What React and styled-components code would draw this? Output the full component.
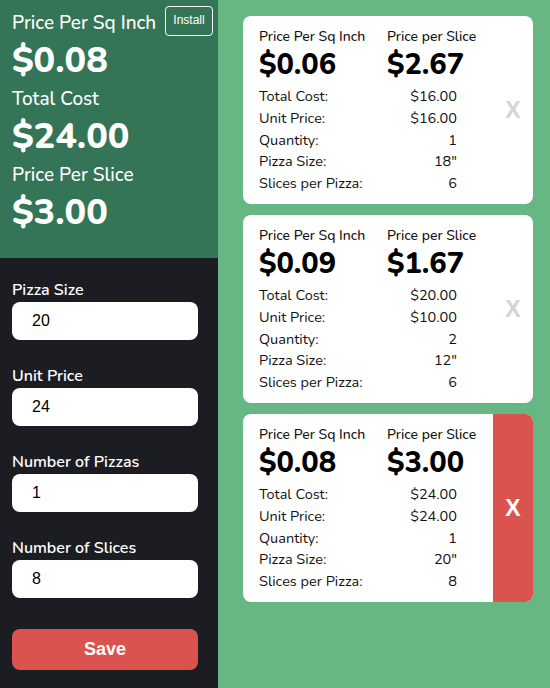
import React from "react";
import styled, { createGlobalStyle } from "styled-components";

const Global = createGlobalStyle`
  html, body { margin: 0; padding: 0; }
  body { font-family: "Nunito", "Lato", "Noto Sans", sans-serif; background: #66b784; }
  * { box-sizing: border-box; }
`;

const Page = styled.div`
  display: flex;
  width: 550px;
  height: 688px;
  background: #66b784;
  overflow: hidden;
`;

const Side = styled.div`
  width: 218px;
  display: flex;
  flex-direction: column;
  background: #1b1d22;
`;

const Summary = styled.div`
  position: relative;
  height: 258px;
  background: #357557;
  color: #fff;
  padding: 11px 12px;
`;

const SumLabel = styled.div`
  font-size: 19px;
  line-height: 24px;
  font-weight: 500;
`;

const SumValue = styled.div`
  font-size: 36px;
  line-height: 44px;
  font-weight: 800;
  margin: 4px 0 4px;
`;

const InstallButton = styled.button`
  position: absolute;
  top: 6px;
  right: 5px;
  width: 48px;
  height: 30px;
  background: transparent;
  color: #fff;
  border: 1px solid #fff;
  border-radius: 4px;
  font-family: "Liberation Sans", Arial, sans-serif;
  font-size: 12px;
  padding: 0 0 3px;
`;

const Form = styled.div`
  display: flex;
  flex-direction: column;
  padding: 23px 20px 0 12px;
`;

const Field = styled.label`
  display: flex;
  flex-direction: column;
  gap: 3px;
  margin-bottom: 27px;
`;

const FieldLabel = styled.span`
  color: #fff;
  font-size: 16px;
  line-height: 18px;
  font-weight: 600;
`;

const Input = styled.input`
  height: 38px;
  width: 186px;
  border: none;
  border-radius: 8px;
  background: #fff;
  padding: 0 20px;
  font-family: "Liberation Sans", Arial, sans-serif;
  font-size: 16px;
  color: #000;
  outline: none;
`;

const SaveButton = styled.button`
  margin-top: 4px;
  width: 186px;
  height: 41px;
  border: none;
  border-radius: 8px;
  background: #db534e;
  color: #fff;
  font-family: "Liberation Sans", Arial, sans-serif;
  font-size: 18px;
  font-weight: 700;
`;

const List = styled.div`
  flex: 1;
  display: flex;
  flex-direction: column;
  gap: 11px;
  padding: 16px 17px 0 25px;
`;

const Card = styled.div`
  display: flex;
  height: 188px;
  background: #fff;
  border-radius: 8px;
  overflow: hidden;
`;

const CardBody = styled.div`
  flex: 1;
  padding: 12px 16px 0;
  color: #111;
`;

const Heads = styled.div`
  display: grid;
  grid-template-columns: 128px 1fr;
`;

const HeadLabel = styled.div`
  font-size: 14px;
  line-height: 18px;
  font-weight: 500;
`;

const HeadValue = styled.div`
  font-size: 29px;
  line-height: 34px;
  margin-top: 2px;
  font-weight: 800;
  color: #000;
`;

const Rows = styled.div`
  display: grid;
  grid-template-columns: 128px 70px;
  margin-top: 4px;
`;

const RowLabel = styled.div`
  font-size: 14.5px;
  line-height: 21.8px;
`;

const RowValue = styled.div`
  font-size: 14.5px;
  line-height: 21.8px;
  text-align: right;
`;

const DeleteButton = styled.button`
  width: 40px;
  border: none;
  background: ${(p) => (p.$active ? "#db534e" : "transparent")};
  color: ${(p) => (p.$active ? "#fff" : "#d4d4d4")};
  font-family: "Liberation Sans", Arial, sans-serif;
  font-size: 23px;
  font-weight: 700;
  padding: 0;
  display: flex;
  align-items: center;
  justify-content: center;
`;

const entries = [
  { sq: "$0.06", slice: "$2.67", total: "$16.00", unit: "$16.00", qty: "1", size: '18"', slices: "6" },
  { sq: "$0.09", slice: "$1.67", total: "$20.00", unit: "$10.00", qty: "2", size: '12"', slices: "6" },
  { sq: "$0.08", slice: "$3.00", total: "$24.00", unit: "$24.00", qty: "1", size: '20"', slices: "8", active: true },
];

export default function App() {
  return (
    <>
      <Global />
      <Page>
        <Side>
          <Summary>
            <SumLabel>Price Per Sq Inch</SumLabel>
            <SumValue>$0.08</SumValue>
            <SumLabel>Total Cost</SumLabel>
            <SumValue>$24.00</SumValue>
            <SumLabel>Price Per Slice</SumLabel>
            <SumValue>$3.00</SumValue>
            <InstallButton>Install</InstallButton>
          </Summary>
          <Form>
            <Field>
              <FieldLabel>Pizza Size</FieldLabel>
              <Input defaultValue="20" />
            </Field>
            <Field>
              <FieldLabel>Unit Price</FieldLabel>
              <Input defaultValue="24" />
            </Field>
            <Field>
              <FieldLabel>Number of Pizzas</FieldLabel>
              <Input defaultValue="1" />
            </Field>
            <Field>
              <FieldLabel>Number of Slices</FieldLabel>
              <Input defaultValue="8" />
            </Field>
            <SaveButton>Save</SaveButton>
          </Form>
        </Side>
        <List>
          {entries.map((e, i) => (
            <Card key={i}>
              <CardBody>
                <Heads>
                  <HeadLabel>Price Per Sq Inch</HeadLabel>
                  <HeadLabel>Price per Slice</HeadLabel>
                  <HeadValue>{e.sq}</HeadValue>
                  <HeadValue>{e.slice}</HeadValue>
                </Heads>
                <Rows>
                  <RowLabel>Total Cost:</RowLabel>
                  <RowValue>{e.total}</RowValue>
                  <RowLabel>Unit Price:</RowLabel>
                  <RowValue>{e.unit}</RowValue>
                  <RowLabel>Quantity:</RowLabel>
                  <RowValue>{e.qty}</RowValue>
                  <RowLabel>Pizza Size:</RowLabel>
                  <RowValue>{e.size}</RowValue>
                  <RowLabel>Slices per Pizza:</RowLabel>
                  <RowValue>{e.slices}</RowValue>
                </Rows>
              </CardBody>
              <DeleteButton $active={e.active}>X</DeleteButton>
            </Card>
          ))}
        </List>
      </Page>
    </>
  );
}
